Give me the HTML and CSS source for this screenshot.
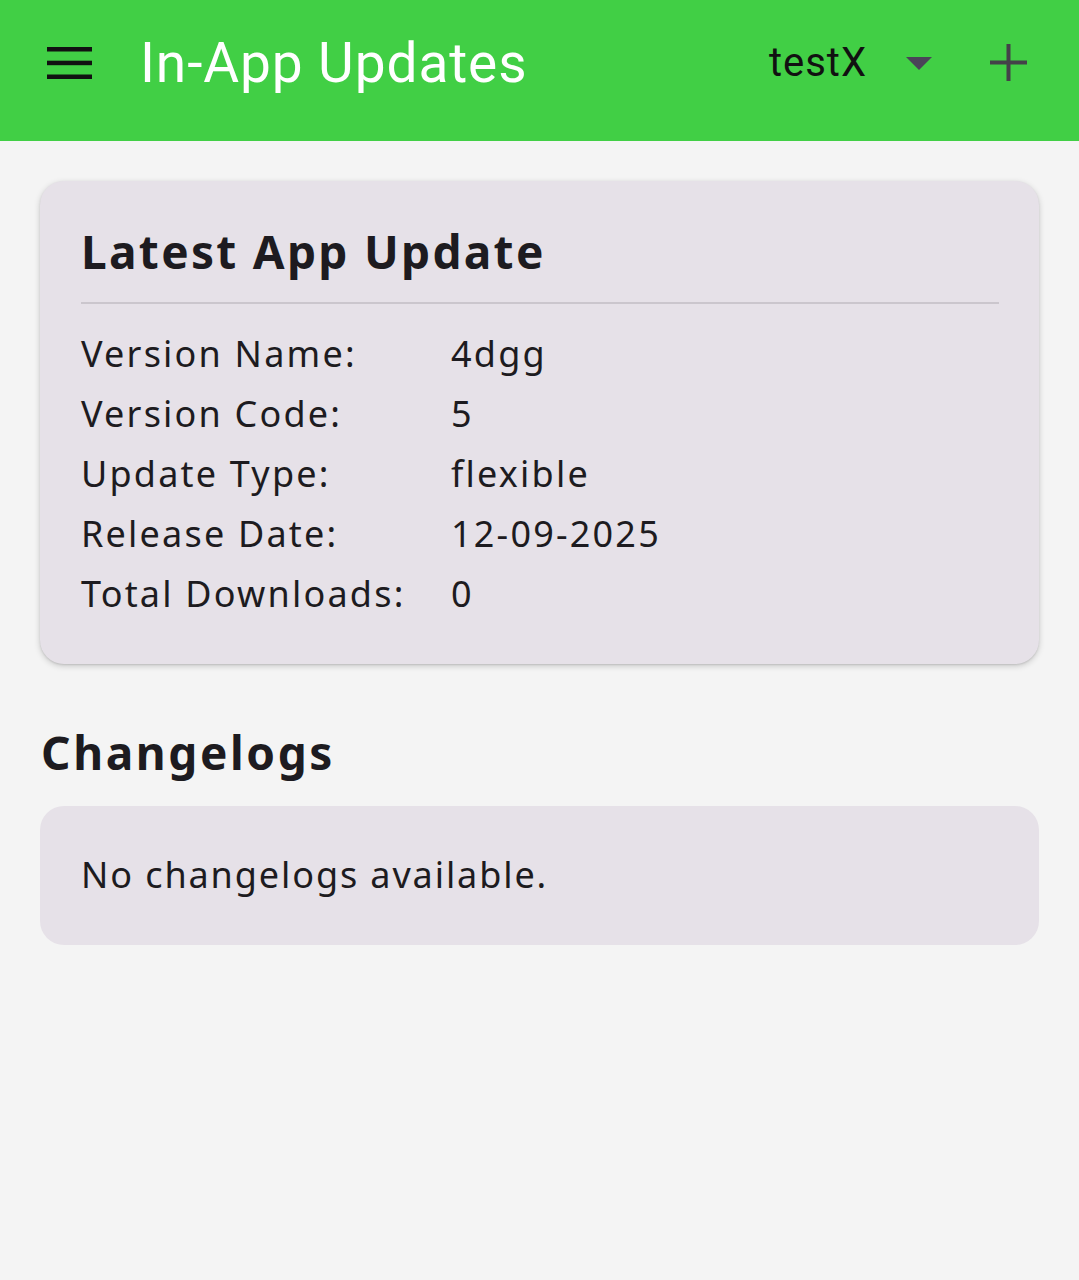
FILE: index.html
```html
<!DOCTYPE html>
<html>
<head>
<meta charset="utf-8">
<link rel="stylesheet" href="styles.css">
</head>
<body>
<header class="appbar">
  <svg class="menu" width="45" height="32" viewBox="0 0 45 32"><rect x="0" y="0" width="45" height="4.5"/><rect x="0" y="13.7" width="45" height="4.5"/><rect x="0" y="27.5" width="45" height="4.5"/></svg>
  <h1 class="title">In-App Updates</h1>
  <div class="spacer"></div>
  <span class="app-name">testX</span>
  <svg class="caret" width="26" height="14" viewBox="0 0 26 14"><path d="M0 0 H26 L13 13 Z"/></svg>
  <svg class="plus" width="37" height="37" viewBox="0 0 37 37"><rect x="16.5" y="0" width="4" height="37"/><rect x="0" y="16.5" width="37" height="4"/></svg>
</header>
<main class="content">
  <section class="card">
    <h2 class="card-title">Latest App Update</h2>
    <div class="divider"></div>
    <div class="info">
      <span class="label">Version Name:</span><span class="value">4dgg</span>
      <span class="label">Version Code:</span><span class="value">5</span>
      <span class="label">Update Type:</span><span class="value">flexible</span>
      <span class="label">Release Date:</span><span class="value">12-09-2025</span>
      <span class="label">Total Downloads:</span><span class="value">0</span>
    </div>
  </section>
  <h2 class="section-title">Changelogs</h2>
  <div class="empty">No changelogs available.</div>
</main>
</body>
</html>
```
FILE: styles.css
```css
html, body {
  margin: 0;
  padding: 0;
  background: #f4f4f4;
  font-family: Roboto, "Noto Sans", sans-serif;
  color: #1d1b20;
}
.appbar {
  height: 141px;
  background: #41cf45;
  display: flex;
  align-items: center;
  padding: 0 52px 16px 47px;
  box-sizing: border-box;
}
.menu {
  fill: #111;
  flex: none;
}
.title {
  margin: 0 0 0 48px;
  font-size: 55px;
  font-weight: 400;
  color: #ffffff;
  letter-spacing: 0.9px;
}
.spacer {
  flex: 1;
}
.app-name {
  font-size: 40px;
  color: #111;
  margin-right: 39px;
  letter-spacing: 1px;
}
.caret {
  fill: #4a4458;
  margin-right: 58px;
  margin-top: 2px;
}
.plus {
  fill: #444149;
}
.content {
  padding: 40px 40px;
}
.card {
  background: #e6e1e8;
  border-radius: 24px;
  padding: 42px 40px 40px 41px;
  box-shadow: 0 2px 6px rgba(0,0,0,0.18), 0 1px 2px rgba(0,0,0,0.1);
}
.card-title {
  margin: 0;
  font-family: "Noto Sans", Roboto, sans-serif;
  font-size: 46px;
  line-height: 56px;
  font-weight: 700;
  letter-spacing: 2.3px;
}
.divider {
  height: 2px;
  background: #cbc6cd;
  margin: 23px 0 20px 0;
}
.info {
  display: grid;
  grid-template-columns: 370px 1fr;
  font-family: "Noto Sans", Roboto, sans-serif;
  font-size: 36px;
  line-height: 60px;
  letter-spacing: 2.2px;
}
.section-title {
  margin: 60px 0 26px 1px;
  font-family: "Noto Sans", Roboto, sans-serif;
  font-size: 46px;
  line-height: 56px;
  font-weight: 700;
  letter-spacing: 2.6px;
}
.empty {
  background: #e6e1e8;
  border-radius: 24px;
  height: 139px;
  display: flex;
  align-items: center;
  padding: 0 41px 2px;
  box-sizing: border-box;
  font-family: "Noto Sans", Roboto, sans-serif;
  font-size: 36px;
  letter-spacing: 1.9px;
}
```
